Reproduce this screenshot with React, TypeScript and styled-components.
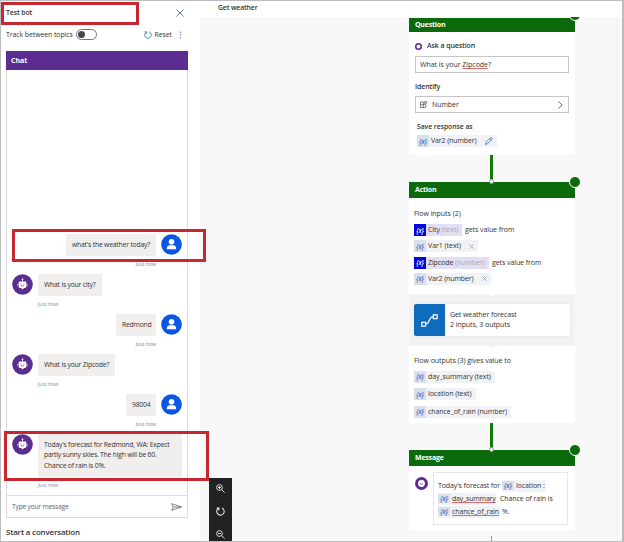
import React from "react";
import styled, { createGlobalStyle } from "styled-components";

const Global = createGlobalStyle`
  * { box-sizing: border-box; }
  body { margin: 0; overflow: hidden; font-family: "Open Sans", "Noto Sans", sans-serif; color: #333; }
  svg { display: block; flex: none; }
`;

const Frame = styled.div`
  position: relative;
  display: flex;
  width: 624px;
  height: 542px;
  background: #fff;
  border: 1px solid #bcbcbc;
  border-right-width: 2px;
  overflow: hidden;
`;

const Txt = styled.span<{ $s?: number; $w?: number; $c?: string; $ls?: number }>`
  font-size: ${(p) => p.$s ?? 7}px;
  font-weight: ${(p) => p.$w ?? 400};
  color: ${(p) => p.$c ?? "#333"};
  letter-spacing: ${(p) => p.$ls ?? -0.04}px;
  line-height: 10px;
  white-space: nowrap;
`;

/* Test pane */
const Pane = styled.aside`
  display: flex;
  flex-direction: column;
  width: 199px;
  flex: none;
  padding: 0 13px 0 5px;
`;
const PaneTitle = styled.div`
  display: flex;
  flex: none;
  align-items: center;
  justify-content: space-between;
  height: 23px;
  padding-right: 3px;
`;
const PaneOptions = styled.div`
  display: flex;
  flex: none;
  align-items: center;
  height: 21px;
  margin-bottom: 6px;
`;
const Toggle = styled.span`
  display: flex;
  align-items: center;
  width: 21px;
  height: 11px;
  margin-left: 3px;
  padding-left: 1px;
  border: 1px solid #777;
  border-radius: 6px;
  &::before {
    content: "";
    width: 7px;
    height: 7px;
    border-radius: 50%;
    background: #484644;
  }
`;
const ResetGroup = styled.div`
  display: flex;
  align-items: center;
  gap: 2px;
  margin-left: auto;
  padding-right: 5px;
  svg:last-child { margin-left: 5px; }
`;
const ChatBox = styled.section`
  display: flex;
  flex-direction: column;
  width: 182px;
  height: 467px;
  flex: none;
  border: 1px solid #dcdcdc;
  border-top: 0;
`;
const ChatHeader = styled.header`
  display: flex;
  flex: none;
  align-items: center;
  height: 19px;
  margin: 0 -1px;
  padding-left: 5px;
  background: #5c2d91;
`;
const Log = styled.div`
  display: flex;
  flex: 1;
  flex-direction: column;
  justify-content: flex-end;
`;
const Turn = styled.div<{ $user?: boolean; $tall?: boolean }>`
  display: flex;
  flex: none;
  flex-direction: ${(p) => (p.$user ? "row-reverse" : "row")};
  gap: 5px;
  height: ${(p) => (p.$tall ? 61 : 40)}px;
  padding: 0 5px;
  align-items: flex-start;
`;
const Stack = styled.div<{ $user?: boolean }>`
  display: flex;
  flex-direction: column;
  align-items: ${(p) => (p.$user ? "flex-end" : "flex-start")};
`;
const Bubble = styled.div<{ $width: number; $tall?: boolean }>`
  display: flex;
  flex-direction: column;
  justify-content: center;
  width: ${(p) => p.$width}px;
  height: ${(p) => (p.$tall ? 43 : 22)}px;
  padding-left: 6px;
  background: #f1efee;
  margin-bottom: 3px;
  ${Txt} { line-height: 10.4px; }
`;
const Composer = styled.div`
  display: flex;
  flex: none;
  align-items: center;
  justify-content: space-between;
  height: 22px;
  padding: 0 5px;
  border-top: 1px solid #dedede;
`;
const StartLine = styled.div`
  display: flex;
  flex: none;
  align-items: center;
  height: 22px;
  padding-top: 6px;
`;

/* Authoring canvas */
const Author = styled.main`
  position: relative;
  display: flex;
  flex: 1;
  flex-direction: column;
  background: #f8f8f8;
`;
const TopicBar = styled.header`
  display: flex;
  align-items: center;
  height: 16px;
  padding: 0 0 2px 18px;
  background: #fff;
`;
const Canvas = styled.div`
  display: flex;
  flex: 1;
  flex-direction: column;
  width: 418px;
  padding-left: 209px;
  padding-top: 1px;
  border-right: 1px solid #f1f1f1;
  overflow: hidden;
`;
const Node = styled.section<{ $h: number }>`
  display: flex;
  flex: none;
  flex-direction: column;
  width: 166px;
  height: ${(p) => p.$h}px;
  background: #fff;
`;
const NodeHead = styled.header<{ $h?: number }>`
  position: relative;
  display: flex;
  flex: none;
  align-items: center;
  height: ${(p) => p.$h ?? 16}px;
  padding: 0 0 1px 6px;
  background: #0b6a0b;
`;
const StatusDot = styled.i<{ $top?: number }>`
  position: absolute;
  right: -6px;
  top: ${(p) => p.$top ?? -6}px;
  width: 12px;
  height: 12px;
  border-radius: 50%;
  background: #0b6a0b;
  border: 1px solid #fff;
`;
const Port = styled.i`
  position: absolute;
  left: 80px;
  top: -3px;
  width: 5px;
  height: 5px;
  border-radius: 50%;
  background: #fff;
  border: 1px solid #9a9a9a;
`;
const Link = styled.i<{ $h: number; $thin?: boolean }>`
  flex: none;
  width: ${(p) => (p.$thin ? 1 : 3)}px;
  height: ${(p) => p.$h}px;
  margin-left: ${(p) => (p.$thin ? 82 : 81)}px;
  margin-top: ${(p) => (p.$thin ? 5 : 0)}px;
  background: ${(p) => (p.$thin ? "#999" : "#107c10")};
`;
const Form = styled.div`
  display: flex;
  flex-direction: column;
  padding: 8px 6px 0;
`;
const Line = styled.div<{ $h?: number; $gap?: number; $pad?: number; $drop?: number }>`
  display: flex;
  flex: none;
  align-items: center;
  height: ${(p) => p.$h ?? 16}px;
  gap: ${(p) => p.$gap ?? 0}px;
  padding-left: ${(p) => p.$pad ?? 0}px;
  padding-top: ${(p) => p.$drop ?? 0}px;
`;
const Field = styled.div`
  display: flex;
  flex: none;
  align-items: center;
  width: 154px;
  height: 17px;
  padding: 0 5px 0 4px;
  gap: 5px;
  border: 1px solid #c8c6c4;
  svg:last-child:not(:first-child) { margin-left: auto; }
`;
const Misspelt = styled.span`
  text-decoration: underline solid #dc6a74 1px;
  text-underline-offset: 1px;
  text-decoration-skip-ink: none;
`;
const Chip = styled.span<{ $w: number; $bg?: string }>`
  display: flex;
  flex: none;
  align-items: center;
  width: ${(p) => p.$w}px;
  height: 12px;
  gap: 2px;
  background: ${(p) => p.$bg ?? "#f1f2f5"};
  svg { margin-left: auto; margin-right: 4px; }
`;
const Var = styled.span<{ $solid?: boolean; $small?: boolean }>`
  display: flex;
  align-items: center;
  justify-content: center;
  flex: none;
  width: 12px;
  height: ${(p) => (p.$small ? 9 : 12)}px;
  background: ${(p) => (p.$solid ? "#0505e0" : "#d8e0ec")};
  color: ${(p) => (p.$solid ? "#fff" : "#3b6bc0")};
  font-size: 6.3px;
  font-style: italic;
  font-weight: 600;
  line-height: 9px;
`;
const ActionBody = styled.div<{ $h: number; $top: number }>`
  display: flex;
  flex: none;
  flex-direction: column;
  height: ${(p) => p.$h}px;
  padding: ${(p) => p.$top}px 0 0 5px;
`;
const FlowBand = styled.div`
  display: flex;
  flex: none;
  align-items: center;
  position: relative;
  height: 52px;
  padding-left: 5px;
  background: #f2f2f2;
`;
const Notch = styled.i<{ $bottom?: boolean }>`
  position: absolute;
  left: 79px;
  top: ${(p) => (p.$bottom ? "52px" : "0")};
  border: 4px solid transparent;
  border-bottom-width: 0;
  border-top: 2px solid ${(p) => (p.$bottom ? "#f2f2f2" : "#fff")};
`;
const FlowCard = styled.div`
  display: flex;
  align-items: center;
  width: 156px;
  height: 32px;
  background: #fff;
  border-radius: 2px;
  overflow: hidden;
  box-shadow: 0 0 2px #ddd;
`;
const FlowLogo = styled.div`
  display: grid;
  place-items: center;
  width: 31px;
  height: 32px;
  margin-right: 5px;
  background: #0f6cbd;
`;
const MessageRow = styled.div`
  display: flex;
  align-items: flex-start;
  padding: 6px 0 0 6px;
  gap: 5px;
  > svg { margin-top: 5px; }
`;
const MessageBox = styled.div`
  width: 135px;
  height: 53px;
  padding: 6px 0 0 4px;
  border: 1px solid #e6e6e6;
`;
const ZoomBar = styled.nav`
  position: absolute;
  left: 9px;
  bottom: 0;
  display: flex;
  flex-direction: column;
  align-items: center;
  gap: 14px;
  width: 23px;
  height: 63px;
  padding-top: 6px;
  background: #222;
`;
const Highlight = styled.div<{ $x: number; $y: number; $w: number; $h: number }>`
  position: absolute;
  left: ${(p) => p.$x - 1}px;
  top: ${(p) => p.$y - 1}px;
  width: ${(p) => p.$w}px;
  height: ${(p) => p.$h}px;
  border: 3px solid #c9272f;
`;

const UserAvatar = () => (
  <svg width="21" height="21" viewBox="0 0 21 21">
    <circle cx="10.5" cy="10.5" r="10.3" fill="#0b57e3" />
    <circle cx="10.5" cy="7.7" r="2.8" fill="#fff" />
    <path d="M5.9 15.3v-1.1c0-1.9 1.2-3 3-3h3.2c1.8 0 3 1.1 3 3v1.1z" fill="#fff" />
  </svg>
);
const BotAvatar = () => (
  <svg width="21" height="21" viewBox="0 0 21 21">
    <circle cx="10.5" cy="10.5" r="10.3" fill="#5c2d91" />
    <circle cx="10.5" cy="5.3" r=".9" fill="#fff" />
    <path d="M10.5 5v3M5.6 10v1.8M15.4 10v1.8" stroke="#fff" strokeWidth=".6" />
    <path d="M8 7.6h5a1.4 1.4 0 0 1 1.4 1.4v3.500a1.400 1.400 0 0 1-1.400 1.400h-.9l-1.600 1.700-1.600-1.700H8a1.400 1.400 0 0 1-1.400-1.400V9A1.400 1.400 0 0 1 8 7.600z" fill="#fff" />
    <path d="M9 9.3v.9M12 9.3v.9M8.9 11.500q1.600 1.200 3.200 0" stroke="#5c2d91" strokeWidth=".7" fill="none" />
  </svg>
);
const CloseIcon = ({ size = 8, color = "#4477b5" }: { size?: number; color?: string }) => (
  <svg width={size} height={size} viewBox="0 0 8 8">
    <path d="M.4.4l7.2 7.2M7.6.4L.4 7.6" stroke={color} strokeWidth={size < 6 ? 1.1 : 0.9} />
  </svg>
);
const ResetIcon = ({ color, size = 8 }: { color: string; size?: number }) => (
  <svg width={size} height={size} viewBox="0 0 8 8" fill="none" stroke={color} strokeWidth=".9">
    <path d="M5.2.9A3.3 3.3 0 1 1 2.3 1.1M.6.8h2v2" />
  </svg>
);
const MoreIcon = () => (
  <svg width="3" height="8" viewBox="0 0 3 8" fill="#5a80bd">
    <circle cx="1.5" cy="1.2" r=".7" /><circle cx="1.5" cy="4" r=".7" /><circle cx="1.5" cy="6.8" r=".7" />
  </svg>
);
const SendIcon = () => (
  <svg width="11" height="8" viewBox="0 0 11 8" fill="none" stroke="#666" strokeWidth=".8">
    <path d="M.7.7l9.7 3.3L.7 7.3 2.3 4zM2.3 4h8" />
  </svg>
);
const NumberIcon = () => (
  <svg width="7" height="7" viewBox="0 0 7 7" fill="none" stroke="#555" strokeWidth=".7">
    <path d="M3.5 1H.5v5.5h5.3V3.7M.5 3.7h5.3M3.3 1v5.5M4.6.5h1.9v1.9H4.6z" />
  </svg>
);
const ChevronIcon = () => (
  <svg width="5" height="8" viewBox="0 0 5 8" fill="none" stroke="#555" strokeWidth=".9"><path d="M.5.5L4.2 4 .5 7.5" /></svg>
);
const PencilIcon = () => (
  <svg width="8" height="8" viewBox="0 0 8 8" fill="none" stroke="#3d70b8" strokeWidth=".8">
    <path d="M.6 7.4l.6-2.3L5.5.8q.8-.6 1.4 0t0 1.5L2.7 6.7zM4.7 1.6l1.5 1.5" />
  </svg>
);
const FlowIcon = () => (
  <svg width="17" height="13" viewBox="0 0 17 13" fill="none" stroke="#fff" strokeWidth="1.2">
    <path d="M.8 8.3h3.8v3.8H.8zM12.3.8h3.8v3.8h-3.8zM4.6 10.2c4.5 0 2.8-7.5 7.7-7.5" />
  </svg>
);
const RingIcon = ({ size, inner, face }: { size: number; inner: number; face?: boolean }) => (
  <svg width={size} height={size} viewBox={`0 0 ${size} ${size}`}>
    <circle cx={size / 2} cy={size / 2} r={size / 2} fill="#5c2d91" />
    <circle cx={size / 2} cy={size / 2} r={inner} fill="#fff" />
    {face && <path d="M5 6.7q1.5 1.2 3 0" fill="none" stroke="#5c2d91" strokeWidth=".7" />}
  </svg>
);
const MagnifyIcon = ({ plus }: { plus?: boolean }) => (
  <svg width="9" height="9" viewBox="0 0 9 9" fill="none" stroke="#eee" strokeWidth=".9">
    <circle cx="3.5" cy="3.5" r="2.9" />
    <path d={plus ? "M5.6 5.6L8.6 8.6M2 3.5h3M3.5 2v3" : "M5.6 5.6L8.6 8.6M2 3.5h3"} />
  </svg>
);

const turns = [
  { user: true, width: 90, lines: ["what's the weather today?"] },
  { user: false, width: 64, lines: ["What is your city?"] },
  { user: true, width: 40, lines: ["Redmond"] },
  { user: false, width: 77, lines: ["What is your Zipcode?"] },
  { user: true, width: 30, lines: ["98004"] },
  { user: false, width: 144, lines: ["Today's forecast for Redmond, WA: Expect", "partly sunny skies. The high will be 60.", "Chance of rain is 0%."] },
];

const outputs = [
  { name: "day_summary (text)", width: 81 },
  { name: "location (text)", width: 62 },
  { name: "chance_of_rain (number)", width: 97 },
];

export default function App() {
  return (
    <Frame>
      <Global />
      <Pane>
        <PaneTitle>
          <Txt $w={600} $s={6.9} $ls={-0.1}>Test bot</Txt>
          <CloseIcon />
        </PaneTitle>
        <PaneOptions>
          <Txt $s={6.9} $ls={-0.06}>Track between topics</Txt>
          <Toggle />
          <ResetGroup><ResetIcon color="#4477b5" /><Txt $s={6.9}>Reset</Txt><MoreIcon /></ResetGroup>
        </PaneOptions>
        <ChatBox>
          <ChatHeader><Txt $w={700} $c="#fff" $s={7}>Chat</Txt></ChatHeader>
          <Log>
            {turns.map((t) => (
              <Turn key={t.lines[0]} $user={t.user} $tall={t.lines.length > 1}>
                {t.user ? <UserAvatar /> : <BotAvatar />}
                <Stack $user={t.user}>
                  <Bubble $width={t.width} $tall={t.lines.length > 1}>
                    {t.lines.map((l) => <Txt key={l} $s={6.8} $ls={-0.2}>{l}</Txt>)}
                  </Bubble>
                  <Txt $s={5.2} $c="#888">Just now</Txt>
                </Stack>
              </Turn>
            ))}
          </Log>
          <Composer><Txt $c="#666" $s={6.7} $ls={-0.2}>Type your message</Txt><SendIcon /></Composer>
        </ChatBox>
        <StartLine><Txt $w={600} $s={7.9} $ls={-0.14}>Start a conversation</Txt></StartLine>
      </Pane>

      <Author>
        <TopicBar><Txt $w={600} $s={6.8} $ls={-0.1}>Get weather</Txt></TopicBar>
        <Canvas>
          <Node $h={137}>
            <NodeHead $h={14}><Txt $w={700} $c="#fff" $ls={-0.2}>Question</Txt><StatusDot $top={-9} /></NodeHead>
            <Form>
              <Line $h={12} $gap={5}><RingIcon size={7} inner={1.9} /><Txt $w={600} $ls={-0.1}>Ask a question</Txt></Line>
              <Line $h={4} />
              <Field><Txt $ls={-0.02}>What is your <Misspelt>Zipcode</Misspelt>?</Txt></Field>
              <Line $h={23} $drop={4}><Txt $w={600} $ls={-0.12}>Identify</Txt></Line>
              <Field><NumberIcon /><Txt $ls={-0.06}>Number</Txt><ChevronIcon /></Field>
              <Line $h={22} $pad={2} $drop={6}><Txt $w={600} $s={6.8} $ls={-0.03}>Save response as</Txt></Line>
              <Line $h={12} $pad={2}><Chip $w={80}><Var>{"{x}"}</Var><Txt $ls={-0.12}>Var2 (number)</Txt><PencilIcon /></Chip></Line>
            </Form>
          </Node>
          <Link $h={27} />
          <Node $h={241}>
            <NodeHead><Txt $w={700} $c="#fff" $ls={-0.2}>Action</Txt><Port /><StatusDot /></NodeHead>
            <ActionBody $h={96} $top={8}>
              <Line><Txt>Flow inputs (2)</Txt></Line>
              <Line $gap={3}><Chip $w={48} $bg="#e2dff3"><Var $solid>{"{x}"}</Var><Txt>City <Txt $c="#aaa6be">(text)</Txt></Txt></Chip><Txt $ls={-0.08}>gets value from</Txt></Line>
              <Line><Chip $w={64}><Var>{"{x}"}</Var><Txt>Var1 (text)</Txt><CloseIcon size={5} color="#8099bd" /></Chip></Line>
              <Line $h={17} $gap={3}><Chip $w={75} $bg="#e2dff3"><Var $solid>{"{x}"}</Var><Txt $ls={-0.08}>Zipcode <Txt $c="#aaa6be" $ls={-0.08}>(number)</Txt></Txt></Chip><Txt $ls={-0.08}>gets value from</Txt></Line>
              <Line $h={15}><Chip $w={77}><Var>{"{x}"}</Var><Txt $ls={-0.12}>Var2 (number)</Txt><CloseIcon size={5} color="#8099bd" /></Chip></Line>
            </ActionBody>
            <FlowBand>
              <Notch />
              <FlowCard>
                <FlowLogo><FlowIcon /></FlowLogo>
                <Stack><Txt $ls={-0.09}>Get weather forecast</Txt><Txt $ls={-0.06}>2 inputs, 3 outputs</Txt></Stack>
              </FlowCard>
              <Notch $bottom />
            </FlowBand>
            <ActionBody $h={77} $top={7}>
              <Line $h={15}><Txt>Flow outputs (3) gives value to</Txt></Line>
              {outputs.map((o) => (
                <Line key={o.name} $h={17.5}><Chip $w={o.width}><Var>{"{x}"}</Var><Txt $ls={-0.07}>{o.name}</Txt></Chip></Line>
              ))}
            </ActionBody>
          </Node>
          <Link $h={27} />
          <Node $h={81}>
            <NodeHead><Txt $w={700} $c="#fff" $ls={-0.2}>Message</Txt><Port /><StatusDot /></NodeHead>
            <MessageRow>
              <RingIcon size={13} inner={3.4} face />
              <MessageBox>
                <Line $h={13} $gap={2}><Txt $ls={-0.11}>Today's forecast for</Txt><Chip $w={44}><Var $small>{"{x}"}</Var><Txt $ls={-0.08}>location :</Txt></Chip></Line>
                <Line $h={13} $gap={4}><Chip $w={58}><Var $small>{"{x}"}</Var><Txt $ls={-0.18}><Misspelt>day_summary</Misspelt></Txt></Chip><Txt $ls={-0.08}>Chance of rain is</Txt></Line>
                <Line $h={13} $gap={2}><Chip $w={62}><Var $small>{"{x}"}</Var><Txt $ls={-0.12}><Misspelt>chance_of_rain</Misspelt></Txt></Chip><Txt>%.</Txt></Line>
              </MessageBox>
            </MessageRow>
          </Node>
          <Link $h={6} $thin />
        </Canvas>
        <ZoomBar><MagnifyIcon plus /><ResetIcon color="#eee" size={9} /><MagnifyIcon /></ZoomBar>
      </Author>

      <Highlight $x={1} $y={2} $w={138} $h={23} />
      <Highlight $x={12} $y={229} $w={194} $h={33} />
      <Highlight $x={4} $y={431} $w={205} $h={50} />
    </Frame>
  );
}
